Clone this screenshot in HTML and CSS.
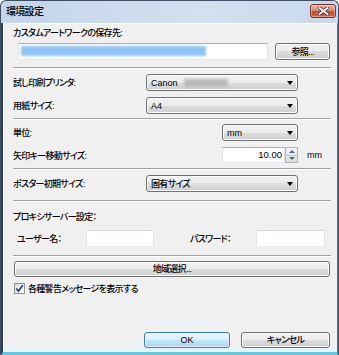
FILE: index.html
```html
<!DOCTYPE html>
<html lang="ja">
<head>
    <meta charset="UTF-8">
    <title>環境設定</title>
    <link rel="stylesheet" href="styles.css">
</head>
<body>
    <div class="window">
        <div class="titlebar">
            <span class="title">環境設定</span>
            <span class="close">
                <svg width="11" height="8" viewBox="0 0 11 8">
                    <path d="M1.5 1 L9.5 7 M9.5 1 L1.5 7" stroke="#3a2a28" stroke-width="3.4" stroke-linecap="square"/>
                    <path d="M1.5 1 L9.5 7 M9.5 1 L1.5 7" stroke="#fff" stroke-width="1.8" stroke-linecap="square"/>
                </svg>
            </span>
        </div>

        <div class="client">
            <div class="label">カスタムアートワークの保存先:</div>
            <div class="path-row">
                <div class="textbox path"><span class="sel"></span></div>
                <div class="btn browse">参照...</div>
            </div>

            <div class="sep"></div>

            <div class="field">
                <span class="name">試し印刷プリンタ:</span>
                <div class="combo wide"><span class="latin">Canon</span><span class="smudge"></span><i class="arrow"></i></div>
            </div>
            <div class="field next">
                <span class="name">用紙サイズ:</span>
                <div class="combo wide"><span class="latin">A4</span><i class="arrow"></i></div>
            </div>

            <div class="sep tight"></div>

            <div class="field unit">
                <span class="name long">単位:</span>
                <div class="combo narrow"><span class="latin">mm</span><i class="arrow"></i></div>
            </div>
            <div class="field step">
                <span class="name long">矢印キー移動サイズ:</span>
                <div class="textbox spin-value latin">10.00</div>
                <div class="spinner">
                    <span class="up"></span>
                    <span class="down"></span>
                </div>
                <span class="suffix latin">mm</span>
            </div>

            <div class="sep mid"></div>

            <div class="field poster">
                <span class="name">ポスター初期サイズ:</span>
                <div class="combo wide"><span>固有サイズ</span><i class="arrow"></i></div>
            </div>

            <div class="sep wide-gap"></div>

            <div class="label proxy">プロキシサーバー設定：</div>
            <div class="proxy-row">
                <span class="user-label">ユーザー名：</span>
                <div class="textbox proxy-box"></div>
                <span class="pass-label">パスワード：</span>
                <div class="textbox proxy-box pass"></div>
            </div>

            <div class="sep wide-gap"></div>

            <div class="btn region">地域選択...</div>

            <label class="check-row">
                <span class="checkbox">
                    <svg width="9" height="9" viewBox="0 0 9 9">
                        <path d="M1.3 4.6 L3.4 7.2 L7.8 1.2" fill="none" stroke="#23368f" stroke-width="1.6"/>
                    </svg>
                </span>
                各種警告メッセージを表示する
            </label>

            <div class="actions">
                <div class="btn ok latin">OK</div>
                <div class="btn cancel">キャンセル</div>
            </div>
        </div>
    </div>
</body>
</html>
```

FILE: styles.css
```css
* {
    box-sizing: border-box;
}
body {
    margin: 0;
    width: 339px;
    height: 355px;
    overflow: hidden;
    background: #fff;
    font-family: "Liberation Sans", "Noto Sans CJK JP", sans-serif;
    font-size: 9px;
    font-weight: 500;
    font-feature-settings: "palt";
    letter-spacing: -0.7px;
    color: #000;
}
.latin {
    letter-spacing: 0;
    font-weight: 400;
}
.window {
    height: 355px;
    display: flex;
    flex-direction: column;
    border: 1px solid #3f4f66;
    border-bottom: none;
    border-radius: 6px 6px 0 0;
    background: linear-gradient(90deg, #c4d5ea, #d3e0f0 60%, #c9d9ed);
}
.titlebar {
    height: 22px;
    display: flex;
    align-items: flex-start;
    padding: 0 2px 0 5px;
}
.title {
    margin-top: 4px;
    line-height: 14px;
    font-size: 10px;
    letter-spacing: -0.7px;
}
.close {
    margin-left: auto;
    margin-top: 3px;
    width: 26px;
    height: 14px;
    display: flex;
    align-items: center;
    justify-content: center;
    border: 1px solid #7b3428;
    border-radius: 3px;
    background: linear-gradient(#eab0a2, #dc8c78 45%, #c9452d 55%, #d9653f);
    box-shadow: inset 0 0 0 1px rgba(255, 255, 255, 0.35);
}

/* client area */
.client {
    flex: 1;
    display: flex;
    flex-direction: column;
    background: #f0f0f0;
    border-left: 2px solid #2b3c5c;
    border-right: 1px solid #5d6f8a;
    border-bottom: 3px solid #5ccbdc;
    box-shadow: inset 1px 1px 0 #fff;
    padding: 3px 6px 4px 10px;
}
.label {
    line-height: 14px;
}
.path-row {
    display: flex;
    align-items: center;
    height: 17px;
    margin-top: 3px;
}
.textbox {
    background: #fff;
    border: 1px solid #abadb3;
    border-color: #abadb3 #dbdfe6 #e3e9ef #e2e3ea;
}
.path {
    margin-left: 5px;
    width: 250px;
    height: 17px;
}
.sel {
    display: block;
    margin: 2px 0 0 2px;
    width: 185px;
    height: 10px;
    background: #8fc4f7;
    filter: blur(1px);
}
.btn {
    display: flex;
    align-items: center;
    justify-content: center;
    border: 1px solid #707070;
    border-radius: 3px;
    background: linear-gradient(#f2f2f2, #ebebeb 50%, #dddddd 50%, #cfcfcf);
    box-shadow: inset 0 0 0 1px #fcfcfc;
    line-height: 12px;
}
.browse {
    margin-left: auto;
    margin-right: 1px;
    width: 55px;
    height: 17px;
}
.sep {
    margin-top: 7px;
    height: 2px;
    border-top: 1px solid #a0a0a0;
    border-bottom: 1px solid #fff;
}
.sep.tight {
    margin-top: 4px;
}
.sep.mid {
    margin-top: 5px;
}
.sep.wide-gap {
    margin-top: 8px;
}

/* label + control rows */
.field {
    display: flex;
    align-items: center;
    height: 17px;
    margin-top: 5px;
}
.field.next {
    margin-top: 6px;
}
.field.unit {
    margin-top: 4px;
}
.field.step {
    margin-top: 6px;
    height: 16px;
}
.field.poster {
    margin-top: 5px;
}
.name {
    width: 133px;
    flex-shrink: 0;
}
.name.long {
    width: 209px;
}
.combo {
    display: flex;
    align-items: center;
    height: 17px;
    padding-left: 4px;
    border: 1px solid #707070;
    border-radius: 3px;
    background: linear-gradient(#f2f2f2, #ebebeb 50%, #dddddd 50%, #cfcfcf);
    box-shadow: inset 0 0 0 1px #fcfcfc;
}
.combo .latin {
    font-size: 9px;
}
.combo.wide {
    width: 152px;
}
.combo.narrow {
    width: 76px;
}
.arrow {
    margin-left: auto;
    margin-right: 4px;
    border-left: 3.5px solid transparent;
    border-right: 3.5px solid transparent;
    border-top: 4px solid #000;
}
.smudge {
    margin-left: 6px;
    width: 44px;
    height: 8px;
    background: #b9b9b9;
    filter: blur(1.5px);
}
.spin-value {
    width: 63px;
    height: 16px;
    text-align: right;
    padding-right: 2px;
    line-height: 14px;
    font-size: 9.5px;
}
.spinner {
    width: 13px;
    height: 16px;
    display: flex;
    flex-direction: column;
    border: 1px solid #b4b4b4;
    background: linear-gradient(#f4f4f4, #dedede);
}
.spinner span {
    flex: 1;
    display: flex;
    align-items: center;
    justify-content: center;
}
.spinner .up {
    border-bottom: 1px solid #c4c4c4;
}
.spinner .up::before {
    content: "";
    border-left: 3px solid transparent;
    border-right: 3px solid transparent;
    border-bottom: 3px solid #4a6a9c;
}
.spinner .down::before {
    content: "";
    border-left: 3px solid transparent;
    border-right: 3px solid transparent;
    border-top: 3px solid #4a6a9c;
}
.suffix {
    margin-left: 9px;
    font-size: 9px;
}

/* proxy */
.label.proxy {
    margin-top: 8px;
}
.proxy-row {
    display: flex;
    align-items: center;
    height: 17px;
    margin-top: 6px;
    padding-left: 4px;
}
.user-label {
    width: 69px;
}
.proxy-box {
    width: 68px;
    height: 17px;
    border-color: #d5dae2 #e2e6ec #e8ecf0 #e2e6ec;
}
.pass-label {
    margin-left: 36px;
    width: 66px;
}
.proxy-box.pass {
    width: 69px;
}

.region {
    margin-top: 4px;
    margin-left: 1px;
    margin-right: 1px;
    height: 16px;
}
.check-row {
    display: flex;
    align-items: center;
    gap: 3px;
    height: 14px;
    margin-top: 4px;
    margin-left: 1px;
}
.checkbox {
    width: 11px;
    height: 11px;
    display: flex;
    align-items: center;
    justify-content: center;
    border: 1px solid #8e8f8f;
    background: linear-gradient(135deg, #dcdcdc, #fdfdfd);
}

.actions {
    margin-top: auto;
    display: flex;
    justify-content: flex-end;
    gap: 11px;
    margin-right: 1px;
}
.actions .btn {
    height: 16px;
}
.ok {
    width: 86px;
    border-color: #3c7fb1;
    background: linear-gradient(#eaf6fd, #d9f0fc 50%, #bee6fd 50%, #a7d9f5);
    box-shadow: inset 0 0 0 1px #dff2fc;
}
.cancel {
    width: 89px;
}
```
